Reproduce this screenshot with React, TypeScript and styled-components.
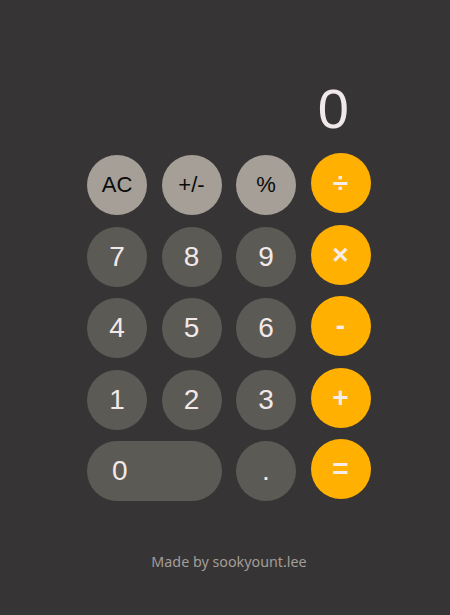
import styled, { createGlobalStyle } from "styled-components";

type Kind = "func" | "digit" | "op";

interface Key {
  label: string;
  kind: Kind;
  wide?: boolean;
}

const rows: Key[][] = [
  [
    { label: "AC", kind: "func" },
    { label: "+/-", kind: "func" },
    { label: "%", kind: "func" },
    { label: "÷", kind: "op" },
  ],
  [
    { label: "7", kind: "digit" },
    { label: "8", kind: "digit" },
    { label: "9", kind: "digit" },
    { label: "×", kind: "op" },
  ],
  [
    { label: "4", kind: "digit" },
    { label: "5", kind: "digit" },
    { label: "6", kind: "digit" },
    { label: "-", kind: "op" },
  ],
  [
    { label: "1", kind: "digit" },
    { label: "2", kind: "digit" },
    { label: "3", kind: "digit" },
    { label: "+", kind: "op" },
  ],
  [
    { label: "0", kind: "digit", wide: true },
    { label: ".", kind: "digit" },
    { label: "=", kind: "op" },
  ],
];

const App = () => {
  return (
    <>
      <GlobalStyle />
      <Page>
        <Calculator>
          <Display>0</Display>
          <Keypad>
            {rows.map((row, i) => (
              <Row key={i}>
                {row.map((k) => (
                  <KeyButton key={k.label} $kind={k.kind} $wide={k.wide}>
                    {k.label}
                  </KeyButton>
                ))}
              </Row>
            ))}
          </Keypad>
        </Calculator>
        <Footer>Made by sookyount.lee</Footer>
      </Page>
    </>
  );
};

export default App;

const GlobalStyle = createGlobalStyle`
  html, body {
    margin: 0;
    padding: 0;
    background: #363435;
  }
`;

const Page = styled.div`
  min-height: 100vh;
  box-sizing: border-box;
  padding-left: 8px;
  display: flex;
  flex-direction: column;
  align-items: center;
  font-family: "Liberation Sans", Arial, sans-serif;
`;

const Calculator = styled.div`
  width: 284px;
  padding-top: 81px;
`;

const Display = styled.div`
  text-align: right;
  padding-right: 22px;
  font-size: 56px;
  line-height: 56px;
  color: #f1e9e9;
  margin-bottom: 18px;
`;

const Keypad = styled.div`
  display: flex;
  flex-direction: column;
  gap: 11.5px;
`;

const Row = styled.div`
  display: flex;
  align-items: flex-start;
  gap: 14.5px;
`;

const colors: Record<Kind, { bg: string; fg: string }> = {
  func: { bg: "#a59f97", fg: "#0b0b0b" },
  digit: { bg: "#5c5a55", fg: "#f1e9e9" },
  op: { bg: "#ffb000", fg: "#f6ecea" },
};

const KeyButton = styled.button<{ $kind: Kind; $wide?: boolean }>`
  width: ${(p) => (p.$wide ? "134.5px" : "60px")};
  height: 60px;
  flex: none;
  border: none;
  border-radius: 30px;
  padding: ${(p) => (p.$wide ? "0 0 0 25px" : "0")};
  margin-top: ${(p) => (p.$kind === "op" ? "-2px" : "0")};
  display: flex;
  align-items: center;
  justify-content: ${(p) => (p.$wide ? "flex-start" : "center")};
  background: ${(p) => colors[p.$kind].bg};
  color: ${(p) => colors[p.$kind].fg};
  font-family: "Liberation Sans", Arial, sans-serif;
  font-size: ${(p) => (p.$kind === "func" ? "22px" : "28px")};
  font-weight: ${(p) => (p.$kind === "op" ? 700 : 400)};
  cursor: pointer;
`;

const Footer = styled.div`
  margin-top: 51px;
  font-family: "Noto Sans", sans-serif;
  font-size: 14.3px;
  color: #a39d98;
`;
